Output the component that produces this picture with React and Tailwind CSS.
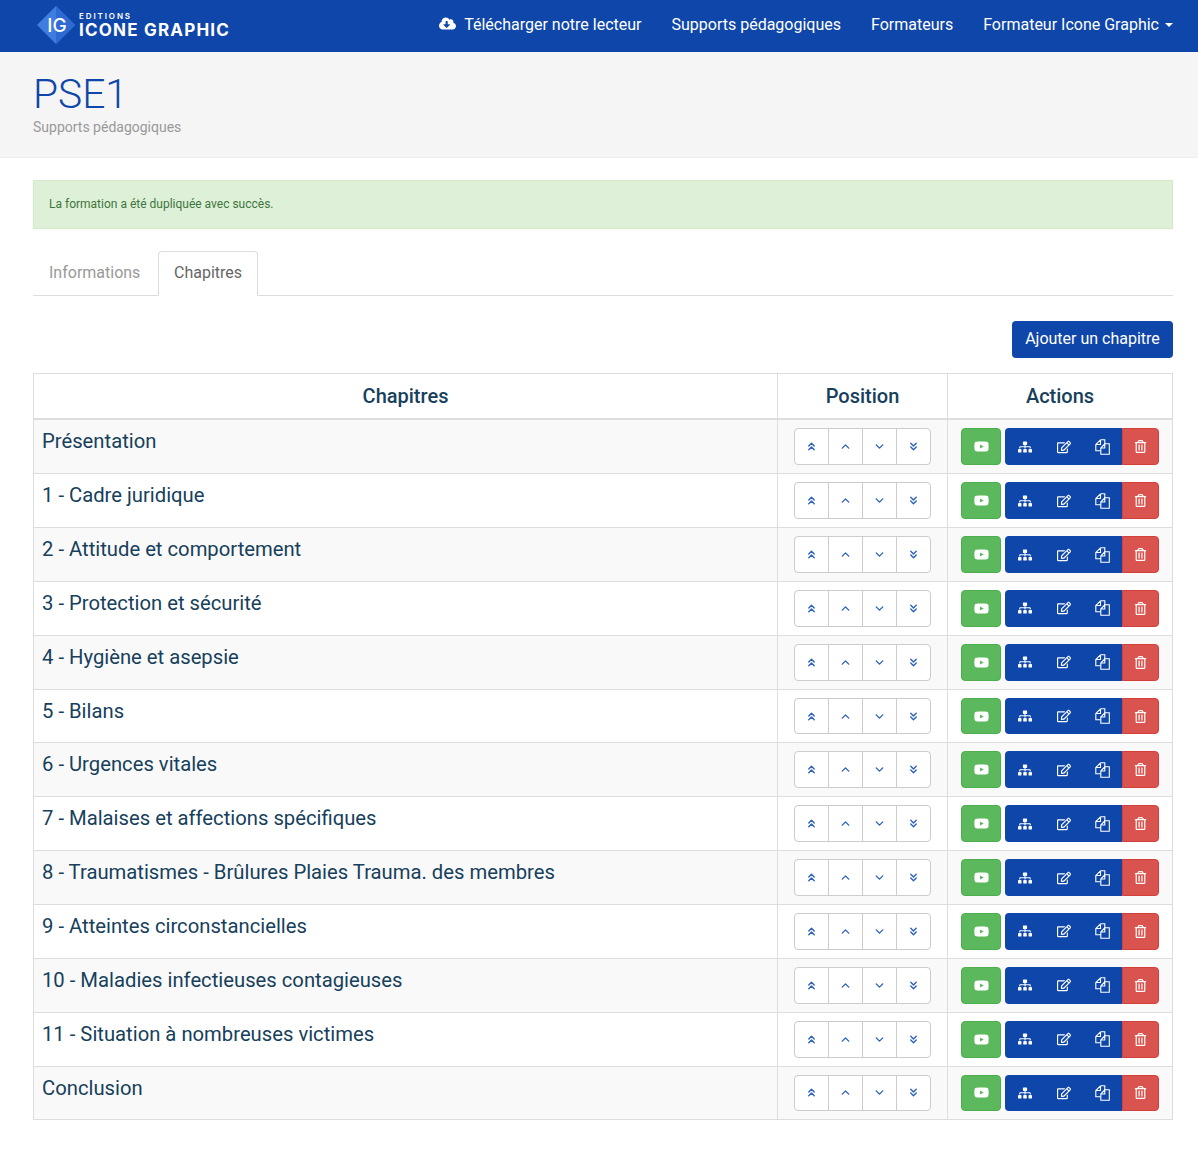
import React from "react";
import { ChevronDown, ChevronUp, ChevronsDown, ChevronsUp } from "lucide-react";
import {
  FaCloudDownloadAlt,
  FaRegEdit,
  FaRegTrashAlt,
  FaSitemap,
  FaYoutube,
} from "react-icons/fa";

const chapters = [
  "Présentation",
  "1 - Cadre juridique",
  "2 - Attitude et comportement",
  "3 - Protection et sécurité",
  "4 - Hygiène et asepsie",
  "5 - Bilans",
  "6 - Urgences vitales",
  "7 - Malaises et affections spécifiques",
  "8 - Traumatismes - Brûlures Plaies Trauma. des membres",
  "9 - Atteintes circonstancielles",
  "10 - Maladies infectieuses contagieuses",
  "11 - Situation à nombreuses victimes",
  "Conclusion",
];

const moves = [ChevronsUp, ChevronUp, ChevronDown, ChevronsDown];

function FilesIcon() {
  return (
    <svg width="15" height="16" viewBox="0 0 15 16" fill="none" stroke="currentColor" strokeWidth="1.1">
      <path d="M5.5 0.8H9.8V5M5.5 0.8L0.8 5.5V11.8H5.8M5.5 0.8V5.5H0.8" />
      <path d="M9.8 4.8H14.3V15.2H5.8V9L9.8 4.8ZM9.8 4.8V9H5.8" />
    </svg>
  );
}

function Logo() {
  return (
    <div className="flex items-center ml-[37px] mb-[2px]">
      <svg width="38" height="38" viewBox="0 0 38 38" className="shrink-0">
        <polygon points="19,0 38,19 19,38 0,19" fill="#3f7de0" />
        <polygon points="19,0 38,19 19,38" fill="#2f6ad2" />
        <text x="20" y="26" textAnchor="middle" fill="#fff" fontFamily="Inter, sans-serif" fontWeight="500" fontSize="19">
          IG
        </text>
      </svg>
      <div className="ml-[4px] flex flex-col font-['Inter',sans-serif] text-white">
        <span className="text-[8px] leading-[9px] font-semibold tracking-[1.9px] mt-[1px]">EDITIONS</span>
        <span className="text-[17px] leading-[18px] font-bold tracking-[1.2px]">ICONE GRAPHIC</span>
      </div>
    </div>
  );
}

function Navbar() {
  return (
    <nav className="h-[52px] bg-[#0f46a9] flex items-center justify-between pr-[25px] text-white">
      <Logo />
      <div className="flex items-center gap-[30px] text-[16px] mb-[2px]">
        <a className="flex items-center gap-[8px]">
          <FaCloudDownloadAlt className="text-[17px] mb-[3px]" />
          Télécharger notre lecteur
        </a>
        <a>Supports pédagogiques</a>
        <a>Formateurs</a>
        <a className="flex items-center gap-[6px]">
          Formateur Icone Graphic
          <span className="w-0 h-0 border-x-4 border-x-transparent border-t-4 border-t-white" />
        </a>
      </div>
    </nav>
  );
}

function ChapterRow({ title, odd }) {
  return (
    <tr className={odd ? "bg-[#f9f9f9]" : "bg-white"}>
      <td className="border border-[#ddd] px-2 pt-2 align-top text-[20.24px] leading-[26px] text-[#16405b]">{title}</td>
      <td className="border border-[#ddd] py-2 text-center">
        <div className="inline-flex align-top h-[36.85px] bg-white border border-[#ccc] rounded-[4px] w-[137px] divide-x divide-[#ccc]">
          {moves.map((Icon, i) => (
            <span key={i} className="flex-1 flex items-center justify-center text-[#2f62bd]">
              <Icon size={13} strokeWidth={2.6} />
            </span>
          ))}
        </div>
      </td>
      <td className="border border-[#ddd] py-2 text-center">
        <div className="inline-flex align-top gap-[4px] text-white text-[14px]">
          <span className="w-[40px] h-[36.85px] flex items-center justify-center bg-[#5cb85c] border border-[#4cae4c] rounded-[4px] text-[15px]">
            <FaYoutube />
          </span>
          <div className="flex h-[36.85px]">
            <span className="flex w-[117px] bg-[#0f46a9] rounded-l-[4px]">
              <span className="flex-1 flex items-center justify-center"><FaSitemap /></span>
              <span className="flex-1 flex items-center justify-center"><FaRegEdit /></span>
              <span className="flex-1 flex items-center justify-center"><FilesIcon /></span>
            </span>
            <span className="w-[37px] flex items-center justify-center bg-[#d9534f] border border-[#d43f3a] rounded-r-[4px]">
              <FaRegTrashAlt className="text-[13px]" />
            </span>
          </div>
        </div>
      </td>
    </tr>
  );
}

export default function App() {
  return (
    <div className="min-h-[1150px] bg-white font-['Roboto',sans-serif]">
      <Navbar />

      <header className="h-[106px] bg-[#f5f5f5] border-b border-[#eee] px-[33px] pt-[20px]">
        <h1 className="text-[40.7px] leading-[44px] font-light text-[#0f46a9]">PSE1</h1>
        <p className="text-[14px] leading-[20px] mt-[1px] text-[#999]">Supports pédagogiques</p>
      </header>

      <main className="ml-[33px] mr-[25px] pt-[22px]">
        <div className="h-[49px] flex items-center pl-[15px] pb-[2px] bg-[#dff0d8] border border-[#d6e9c6] text-[12px] text-[#3c763d]">
          La formation a été dupliquée avec succès.
        </div>

        <div className="mt-[22px] flex h-[45px] border-b border-[#ddd] text-[16px]">
          <span className="w-[125px] flex items-center px-[16px] text-[#999]">Informations</span>
          <span className="w-[100px] h-[45px] flex items-center justify-center pb-[2px] bg-white border border-[#ddd] border-b-white rounded-t-[4px] text-[#666]">
            Chapitres
          </span>
        </div>

        <div className="flex justify-end mt-[25px]">
          <button className="w-[161px] h-[37px] pb-[2px] bg-[#0f46a9] text-white text-[16px] rounded-[4px]">
            Ajouter un chapitre
          </button>
        </div>

        <table className="mt-[15px] w-[1139px] table-fixed border-collapse">
          <colgroup>
            <col className="w-[744px]" />
            <col className="w-[170px]" />
            <col className="w-[225px]" />
          </colgroup>
          <thead>
            <tr className="h-[45.9px] text-[20px] font-medium text-[#16405b]">
              <th className="border border-b-2 border-[#ddd] font-medium">Chapitres</th>
              <th className="border border-b-2 border-[#ddd] font-medium">Position</th>
              <th className="border border-b-2 border-[#ddd] font-medium">Actions</th>
            </tr>
          </thead>
          <tbody>
            {chapters.map((title, i) => (
              <ChapterRow key={title} title={title} odd={i % 2 === 0} />
            ))}
          </tbody>
        </table>
      </main>
    </div>
  );
}
